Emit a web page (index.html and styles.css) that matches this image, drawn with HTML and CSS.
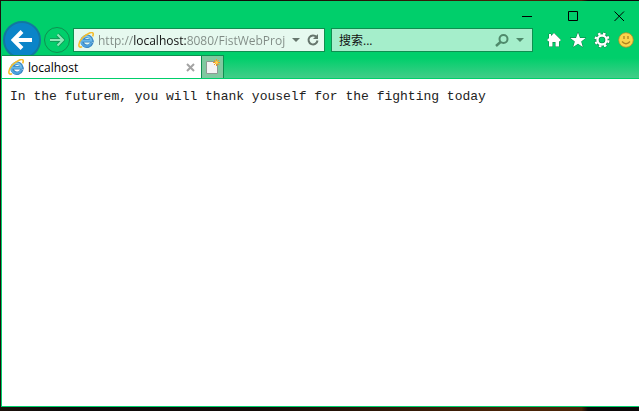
FILE: index.html
```html
<!DOCTYPE html>
<html lang="en">
<head>
  <meta charset="UTF-8">
  <meta name="viewport" content="width=device-width, initial-scale=1.0">
  <title>localhost</title>
  <link rel="stylesheet" href="styles.css">
</head>
<body>
  <svg class="symbols" aria-hidden="true">
    <defs>
      <linearGradient id="blue" x1="0" y1="0" x2="0" y2="1">
        <stop offset="0" stop-color="#7cc8f2"/>
        <stop offset="1" stop-color="#4a9fdc"/>
      </linearGradient>
      <symbol id="ie" viewBox="0 0 16 16">
        <path d="M13.800 10.800A5 5 0 1 1 14 8.700H4.500" fill="none" stroke="#3a86c2" stroke-width="3.400"/>
        <path d="M13.100 10.800A5 5 0 1 1 13.300 8.700H4.500" fill="none" stroke="url(#blue)" stroke-width="2"/>
        <path d="M4 14.800C-.5 16.500 0 10.500 4.500 5.800C9 1.200 14 -.5 15 1.200C15.500 2 15.200 3.200 14.600 4.400" fill="none" stroke="#f5bd2c" stroke-width="1.600"/>
      </symbol>
    </defs>
  </svg>
  <div class="window">
    <div class="titlebar">
      <button class="caption" aria-label="Minimize">
        <svg width="11" height="11"><path d="M0 5.500H10"/></svg>
      </button>
      <button class="caption" aria-label="Maximize">
        <svg width="11" height="11"><path d="M.5.5H9.500V9.500H.5Z"/></svg>
      </button>
      <button class="caption" aria-label="Close">
        <svg width="11" height="11"><path d="M.5.5L10 10M10 .5L.5 10"/></svg>
      </button>
    </div>

    <div class="toolbar">
      <button class="nav back" aria-label="Back">
        <svg width="22" height="20" viewBox="0 0 22 20"><path d="M21 10H3M11 1.500L2.500 10L11 18.500"/></svg>
      </button>
      <button class="nav forward" aria-label="Forward">
        <svg width="16" height="14" viewBox="0 0 16 14">
          <path class="edge" d="M1 7H14M8.500 1.500L14 7L8.500 12.500"/>
          <path d="M1 7H14M8.500 1.500L14 7L8.500 12.500"/>
        </svg>
      </button>
      <div class="field address">
        <svg width="16" height="16"><use href="#ie"/></svg>
        <input class="url" type="text" aria-label="Address" value="http://localhost:8080/FistWebProject/">
        <button class="field-button" aria-label="Show history">
          <svg width="8" height="4"><path d="M0 0H8L4 4Z" fill="#66766d"/></svg>
        </button>
        <button class="field-button" aria-label="Refresh">
          <svg width="12" height="12" viewBox="0 0 12 12">
            <path d="M9.500 3A4.500 4.500 0 1 0 10.500 6.500" fill="none" stroke="#66766d" stroke-width="2"/>
            <path d="M11 0V5H6Z" fill="#66766d"/>
          </svg>
        </button>
      </div>
      <div class="field search">
        <input class="query" type="text" aria-label="搜索" value="搜索...">
        <button class="field-button" aria-label="Search">
          <svg width="14" height="13" viewBox="0 0 14 13">
            <g fill="none" stroke="#4f8a6b" stroke-width="2"><circle cx="8.500" cy="5" r="4"/><path d="M5.500 8L1 12" stroke-width="2.500"/></g>
          </svg>
        </button>
        <button class="field-button" aria-label="Search options">
          <svg width="8" height="4"><path d="M0 0H8L4 4Z" fill="#4f8a6b"/></svg>
        </button>
      </div>
      <div class="tools">
        <button class="tool" aria-label="Home">
          <svg width="16" height="16" viewBox="0 0 16 16"><path class="glyph" d="M8 1L15 8L13.500 9.500L13 9V14.500H9.500V10H6.500V14.500H3V9L2.500 9.500L1 8L3 6V2H5V4Z"/></svg>
        </button>
        <button class="tool" aria-label="Favorites">
          <svg width="16" height="16" viewBox="0 0 16 16"><path class="glyph" d="M8 .5L10 6H15.700L11.200 9.400L12.800 15L8 11.700L3.200 15L4.800 9.400L.3 6H6Z"/></svg>
        </button>
        <button class="tool" aria-label="Tools">
          <svg width="16" height="16" viewBox="0 0 16 16">
            <g fill="none" stroke="#0a7a43"><circle cx="8" cy="8" r="4.500" stroke-width="3.600"/><circle cx="8" cy="8" r="6.500" stroke-width="3" stroke-dasharray="3.100 2.005"/></g>
            <g fill="none" stroke="#fff"><circle cx="8" cy="8" r="4.500" stroke-width="2.400"/><circle cx="8" cy="8" r="6.500" stroke-width="2.200" stroke-dasharray="2.500 2.605" stroke-dashoffset="-.3"/></g>
          </svg>
        </button>
        <button class="tool" aria-label="Send a smile">
          <svg width="16" height="16" viewBox="0 0 16 16">
            <circle cx="8" cy="8" r="7.300" fill="#fcd44c" stroke="#b5892a" stroke-width=".8"/>
            <path d="M6 4V7M10 4V7M4 9.500Q8 14 12 9.500" fill="none" stroke="#b08420" stroke-width="1.300"/>
          </svg>
        </button>
      </div>
    </div>

    <div class="tabs">
      <div class="tab">
        <svg width="16" height="16"><use href="#ie"/></svg>
        <span class="tab-title">localhost</span>
        <button class="tab-close" aria-label="Close tab">
          <svg width="9" height="9"><path d="M1 1L8 8M8 1L1 8" stroke="#a3a3a3" stroke-width="2"/></svg>
        </button>
      </div>
      <button class="new-tab" aria-label="New tab">
        <svg width="16" height="16" viewBox="0 0 16 16">
          <path d="M1.500 2.500H12.500V14.500H1.500Z" fill="#f3f3f3" stroke="#8d9a92"/>
          <path d="M11.500 0V7M8 3.500H15M9 1L14 6M14 1L9 6" stroke="#f49a1a"/>
          <circle cx="11.500" cy="3.500" r="1.500" fill="#ffd34e"/>
        </svg>
      </button>
    </div>

    <main class="page">In the futurem, you will thank youself for the fighting today</main>
  </div>
</body>
</html>
```

FILE: styles.css
```css
* {
  box-sizing: border-box;
}

body {
  margin: 0;
  height: 100vh;
  padding: 1px 0 4px 1px;
  display: flex;
  flex-direction: column;
  background: linear-gradient(to right, #1c120c, #0c0a0a 10%, #120b08 40%, #4a2408 80%, #4a2408 91%, #0b0808 92%);
  font-family: "Open Sans", "Noto Sans CJK SC", sans-serif;
  font-size: 12px;
}

button,
input {
  margin: 0;
  padding: 0;
  border: 0;
  background: none;
  font: inherit;
  outline: none;
}

button {
  display: flex;
  align-items: center;
  justify-content: center;
}

svg {
  display: block;
  flex: none;
}

.symbols {
  position: absolute;
  width: 0;
  height: 0;
}

.window {
  flex: 1;
  display: flex;
  flex-direction: column;
  overflow: hidden;
  border: 1px solid #00cf6b;
  border-right: 0;
  background: linear-gradient(#00cf6b 56px, #48cd8b 78px);
}

.titlebar {
  display: flex;
  justify-content: flex-end;
  height: 26px;
  margin-right: -3px;
}

.caption {
  width: 46px;
  padding-top: 2px;
}

.caption path {
  fill: none;
  stroke: #000;
}

.toolbar {
  display: flex;
  align-items: center;
  height: 24px;
  margin-bottom: 3px;
  padding-left: 1px;
}

.nav {
  flex: none;
  border: 1px solid #0f8f50;
  border-radius: 50%;
}

.nav path {
  fill: none;
  stroke: #fff;
  stroke-width: 4;
}

.back {
  width: 38px;
  height: 38px;
  background: #0a84c8;
  border: 2px solid #1278a0;
}

.forward {
  width: 26px;
  height: 26px;
  margin: 0 3px;
}

.forward path {
  stroke: #8ee8b8;
  stroke-width: 2;
}

.forward .edge {
  stroke: #0f9f58;
  stroke-width: 4;
}

.field {
  display: flex;
  align-items: center;
  height: 24px;
  border: 1px solid #0f8f50;
  min-width: 0;
}

.address {
  flex: 1;
  margin-right: 6px;
  padding: 0 5px 0 4px;
  background: #e6f9ef;
}

.search {
  flex: 0 1 202px;
  padding: 0 8px 0 7px;
  background: #a5eecb;
}

.field input {
  flex: 1;
  min-width: 0;
  height: 20px;
}

/* the host part of the address is darker than the rest */
.url {
  margin: 0 7px 0 4px;
  color: transparent;
  background: linear-gradient(to right, #7f8a84 36px, #111 36px, #111 88px, #7f8a84 88px);
  background-clip: text;
  -webkit-background-clip: text;
}

.query {
  color: #111;
}

.field-button + .field-button {
  margin-left: 7px;
}

.tools {
  display: flex;
  gap: 8px;
  margin: 0 5px 0 13px;
}

.glyph {
  fill: #fff;
  stroke: #0a7a43;
  paint-order: stroke;
}

.tabs {
  display: flex;
  height: 24px;
  border-bottom: 1px solid #00cf6b;
  z-index: 1;
}

.tab {
  display: flex;
  align-items: center;
  flex: 0 1 200px;
  padding: 0 6px;
  gap: 4px;
  border: 1px solid #0f8f50;
  border-width: 1px 1px 0 0;
  background: #fff;
}

.tab-title {
  flex: 1;
}

.new-tab {
  width: 22px;
  border: 1px solid #0f8f50;
  border-width: 1px 1px 0 0;
  background: #80c9a0;
}

.page {
  flex: 1;
  padding: 9px 8px;
  background: #fff;
  color: #222;
  font-family: "Liberation Mono", monospace;
  font-size: 13px;
  line-height: 18px;
}
```
